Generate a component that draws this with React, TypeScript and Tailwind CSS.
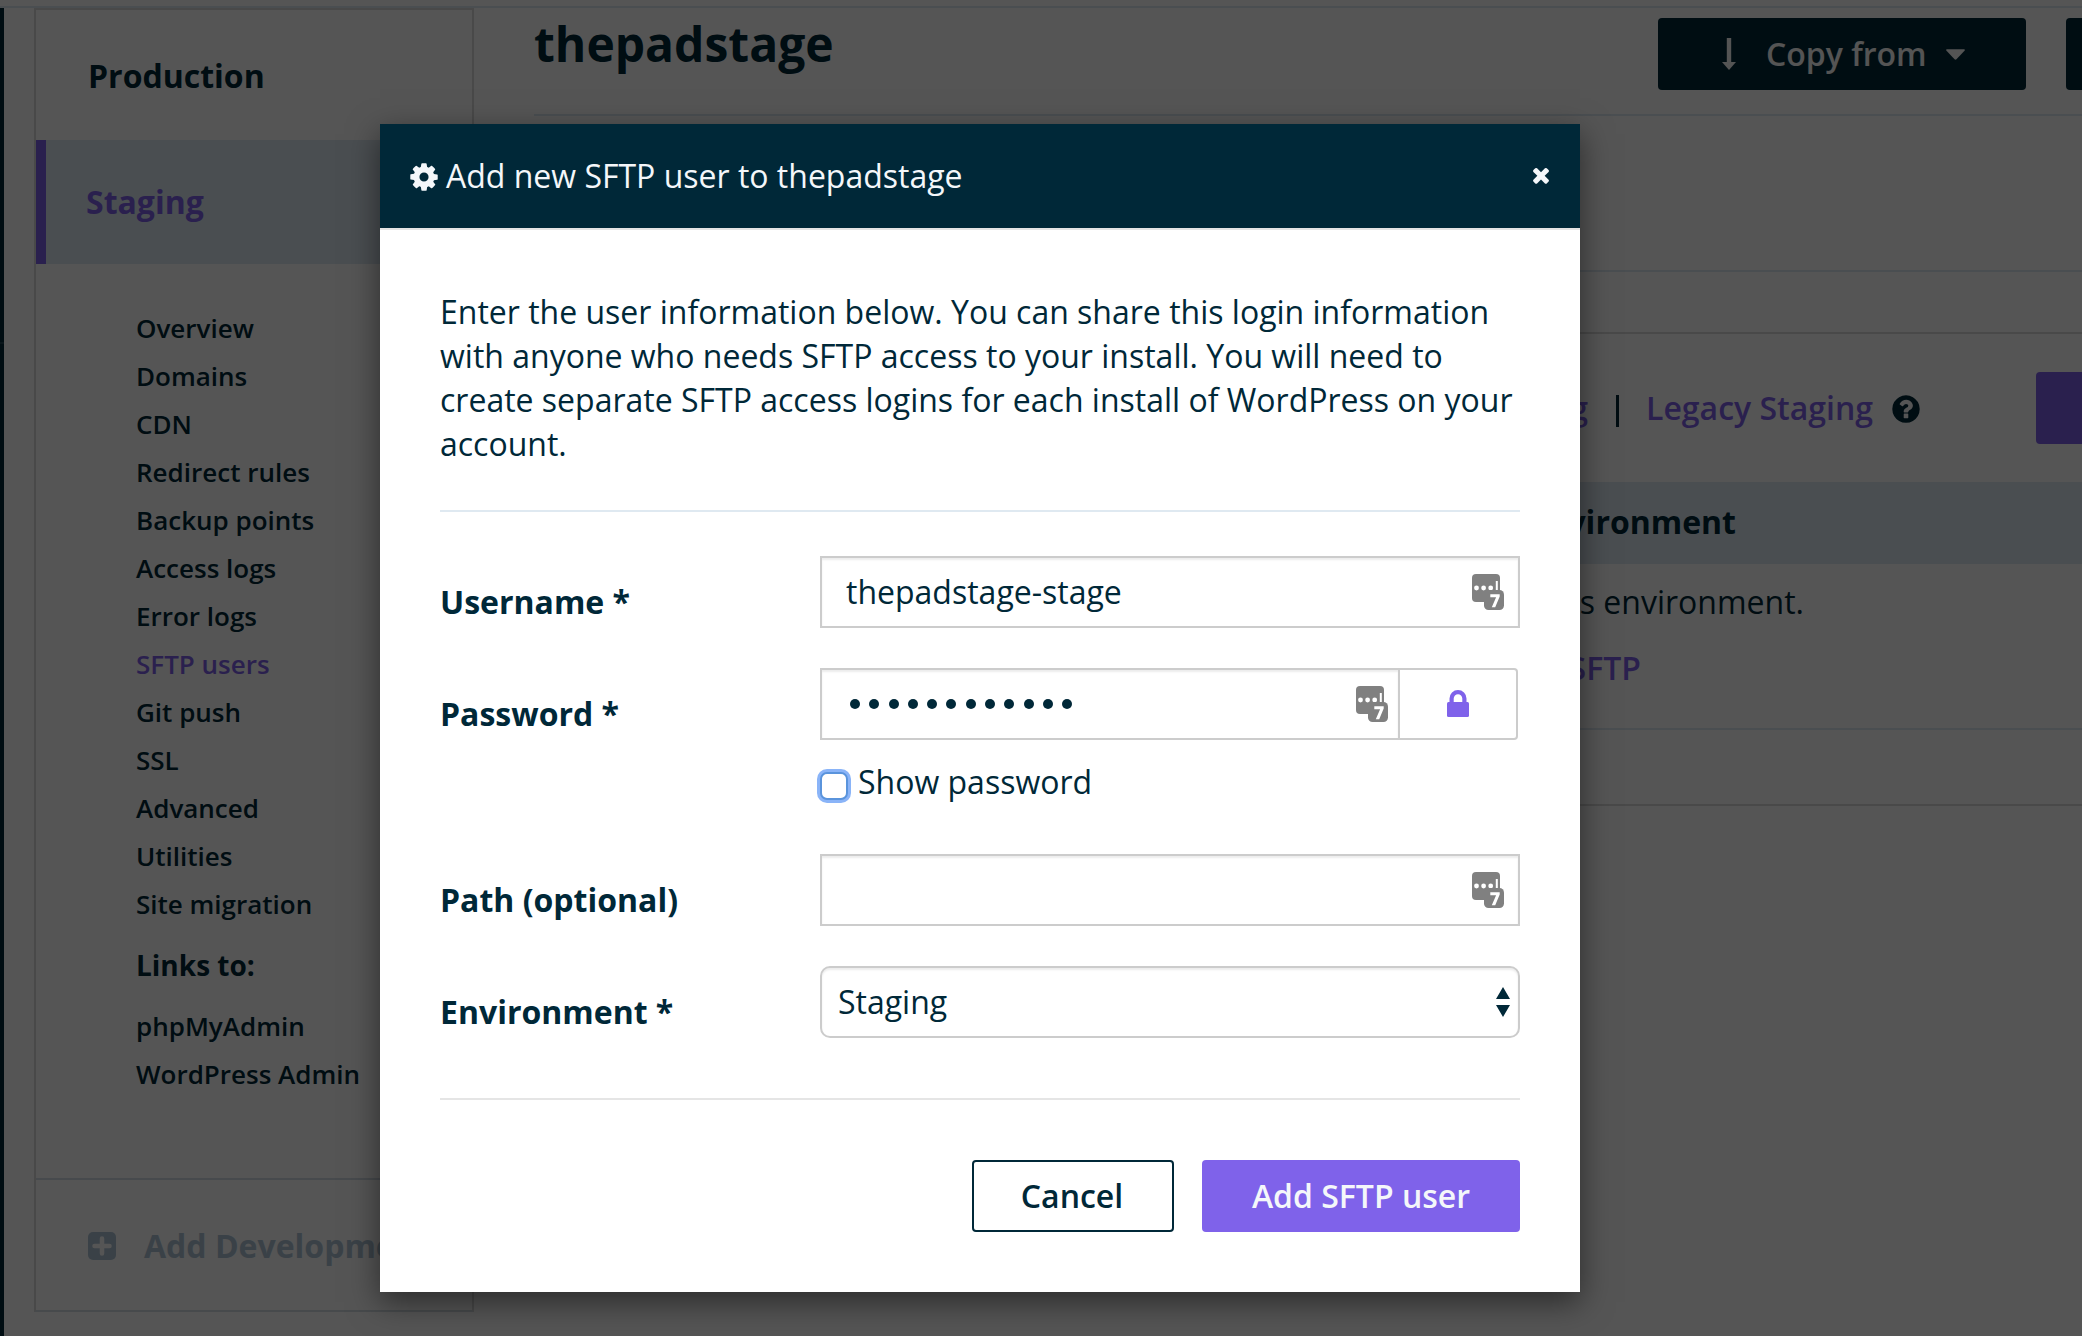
import type { ReactNode } from "react";

const COG =
  "M1152 896q0-106-75-181t-181-75-181 75-75 181 75 181 181 75 181-75 75-181zm512-109v222q0 12-8 23t-20 13l-185 28q-19 54-39 91 35 50 107 138 10 12 10 25t-9 23q-27 37-99 108t-94 71q-12 0-26-9l-138-108q-44 23-91 38-16 136-29 186-7 28-36 28h-222q-14 0-24.5-8.5t-11.5-21.5l-28-184q-49-16-90-37l-141 107q-10 9-25 9-14 0-25-11-126-114-165-168-7-10-7-23 0-12 8-23 15-21 51-66.5t54-70.5q-27-50-41-99l-183-27q-13-2-21-12.5t-8-23.5v-222q0-12 8-23t19-13l186-28q14-46 39-92-40-57-107-138-10-12-10-24 0-10 9-23 26-36 98.5-107.5t94.5-71.5q13 0 26 10l138 107q44-23 91-38 16-136 29-186 7-28 36-28h222q14 0 24.5 8.5t11.5 21.5l28 184q49 16 90 37l142-107q9-9 24-9 13 0 25 10 129 119 165 170 7 8 7 22 0 12-8 23-15 21-51 66.5t-54 70.5q26 50 41 98l183 28q13 2 21 12.5t8 23.5z";
const TIMES =
  "M1490 1322q0 40-28 68l-136 136q-28 28-68 28t-68-28l-294-294-294 294q-28 28-68 28t-68-28l-136-136q-28-28-28-68t28-68l294-294-294-294q-28-28-28-68t28-68l136-136q28-28 68-28t68 28l294 294 294-294q28-28 68-28t68 28l136 136q28 28 28 68t-28 68l-294 294 294 294q28 28 28 68z";
const HELP =
  "M1024 1376v-192q0-14-9-23t-23-9h-192q-14 0-23 9t-9 23v192q0 14 9 23t23 9h192q14 0 23-9t9-23zm256-672q0-88-55.5-163t-138.5-116-170-41q-243 0-371 213-15 24 8 42l132 100q7 6 19 6 16 0 25-12 53-68 86-92 34-24 86-24 48 0 85.5 26t37.5 59q0 38-20 61t-68 45q-63 28-115.5 86.5t-52.5 125.5v36q0 14 9 23t23 9h192q14 0 23-9t9-23q0-19 21.5-49.5t54.5-49.5q32-18 49-28.5t46-35 44.5-48 28-60.5 12.5-81zm384 192q0 209-103 385.5t-279.5 279.5-385.5 103-385.5-103-279.5-279.5-103-385.5 103-385.5 279.5-279.5 385.5-103 385.5 103 279.5 279.5 103 385.5z";

function Glyph({ d, className }: { d: string; className: string }) {
  return (
    <svg viewBox="0 0 1792 1792" fill="currentColor" className={className}>
      <path d={d} />
    </svg>
  );
}

function PasswordManagerIcon() {
  return (
    <svg viewBox="0 0 32 36" className="h-9 w-8 shrink-0">
      <rect x="0" y="0" width="28" height="28" rx="4" fill="#808080" />
      <circle cx="4.5" cy="14" r="2.4" fill="#fff" />
      <circle cx="11.6" cy="14" r="2.4" fill="#fff" />
      <circle cx="18.7" cy="14" r="2.4" fill="#fff" />
      <rect x="23.800" y="7" width="2" height="11" fill="#fff" />
      <rect x="12" y="16" width="20" height="20" rx="4.5" fill="#808080" />
      <path d="M18.300 20.300h9.400v2.300L23.200 33.300h-3.400l4.300-10h-5.800z" fill="#fff" />
    </svg>
  );
}

const navItems = [
  "Overview",
  "Domains",
  "CDN",
  "Redirect rules",
  "Backup points",
  "Access logs",
  "Error logs",
  "SFTP users",
  "Git push",
  "SSL",
  "Advanced",
  "Utilities",
  "Site migration",
];

function Sidebar() {
  return (
    <nav className="ml-[30px] h-[1304px] w-[440px] shrink-0 border-2 border-[#dadada] border-b-[#d5dde3]">
      <div className="h-[130px] pt-11 pl-[52px] text-[32px] leading-[44px] font-bold">Production</div>
      <div className="h-[124px] border-l-[10px] border-[#7f62ea] bg-[#dfebf3] pt-10 pl-10 text-[32px] leading-[44px] font-bold text-[#7f62ea]">
        Staging
      </div>
      <div className="h-[914px] pt-10 pl-[100px] text-[26px] leading-[48px] font-semibold whitespace-nowrap">
        {navItems.map((item) => (
          <div key={item} className={item === "SFTP users" ? "text-[#7f62ea]" : ""}>
            {item}
          </div>
        ))}
        <div className="my-[13px] text-[28px] font-bold">Links to:</div>
        <div>phpMyAdmin</div>
        <div>WordPress Admin</div>
      </div>
      <div className="flex h-[130px] items-center border-t-2 border-[#d5dfe7] pt-1 pl-[52px] text-[32px] leading-[44px] font-bold text-[#aec4d6]">
        <svg viewBox="0 0 28 28" className="mr-[28px] size-7 shrink-0">
          <rect width="28" height="28" rx="5" fill="currentColor" />
          <path d="M14 6.500v15M6.500 14h15" stroke="#fff" strokeWidth="4.500" strokeLinecap="round" />
        </svg>
        <span className="whitespace-nowrap">Add Development</span>
      </div>
    </nav>
  );
}

function MainContent() {
  return (
    <main className="ml-[60px] flex w-[1700px] shrink-0 flex-col">
      <div className="flex h-[108px] items-start justify-between border-b-2 border-[#dfebf3]">
        <h1 className="pt-[2px] text-[48px] leading-[68px] font-bold">thepadstage</h1>
        <div className="mr-[8px] flex gap-10 pt-[10px]">
          <div className="flex h-[72px] w-[368px] items-center rounded bg-[#002838] pl-[64px] text-[32px] font-semibold text-[#fbfbfb]">
            <svg viewBox="0 0 14 32" fill="currentColor" className="mr-[30px] h-8 w-[14px] shrink-0">
              <path d="M4.800 0h4.400v24H14l-7 8-7-8h4.800z" />
            </svg>
            <span className="whitespace-nowrap">Copy from</span>
            <svg viewBox="0 0 20 11" fill="currentColor" className="ml-[19px] h-[11px] w-[19px] shrink-0">
              <path d="M1 0h18q1.500.5.500 1.600l-8.500 8.900q-1 .9-2 0L.5 1.600Q-.5.500 1 0z" />
            </svg>
          </div>
          <div className="h-[72px] w-[160px] rounded bg-[#002838]" />
        </div>
      </div>
      <div className="h-[156px] border-b-2 border-[#dfebf3]" />
      <section className="mt-[60px] h-[474px] border-2 border-[#dadada]">
        <div className="flex h-[148px] items-start pt-[38px]">
          <div className="flex h-[72px] w-[1386px] shrink-0 items-center justify-end text-[32px] font-semibold whitespace-nowrap text-[#7f62ea]">
            <span>Staging</span>
            <span className="mr-[27px] ml-[28px] mt-[5px] h-8 w-[3px] bg-[#002838]" />
            <span>Legacy Staging</span>
            <Glyph d={HELP} className="mt-[1px] ml-[17px] size-8 text-[#002838]" />
          </div>
          <div className="ml-[114px] h-[72px] w-[240px] shrink-0 rounded bg-[#7f62ea]" />
        </div>
        <div className="flex h-[82px] items-center bg-[#dfebf3] pb-[2px] text-[32px] font-bold">
          <span className="w-[1200px] text-right">Environment</span>
        </div>
        <div className="h-[166px] border-b-2 border-[#dfebf3] pt-[5px] text-[32px]">
          <div className="w-[1268px] text-right leading-[66px]">There are no users for this environment.</div>
          <div className="w-[1105px] text-right leading-[66px] font-semibold text-[#7f62ea]">Learn more about SFTP</div>
        </div>
      </section>
    </main>
  );
}

function Row({ label, className, children }: { label: string; className: string; children: ReactNode }) {
  return (
    <div className={`flex ${className}`}>
      <label className="w-[380px] shrink-0 pt-6 leading-[44px] font-bold">{label}</label>
      <div className="w-[700px]">{children}</div>
    </div>
  );
}

function Modal() {
  return (
    <div className="absolute top-[124px] left-[380px] flex h-[1168px] w-[1200px] flex-col bg-white text-[32px] text-[#002838] shadow-[0_10px_30px_rgba(0,0,0,0.5)]">
      <header className="flex h-[106px] shrink-0 items-center border-b-2 border-[#e5e5e5] bg-[#002838] pr-[27px] pl-7 text-[#f4f7fa]">
        <Glyph d={COG} className="mt-[1px] mr-[6px] size-8" />
        <h2 className="leading-[44px]">Add new SFTP user to thepadstage</h2>
        <Glyph d={TIMES} className="mb-[2px] ml-auto size-6" />
      </header>
      <div className="px-[60px] pt-[60px]">
        <p className="h-[222px] border-b-2 border-[#dfe9f1] leading-[44px]">
          Enter the user information below. You can share this login information with anyone who needs SFTP access to
          your install. You will need to create separate SFTP access logins for each install of WordPress on your
          account.
        </p>
        <Row label="Username *" className="mt-11 h-[112px]">
          <div className="flex h-[72px] items-center justify-between border-2 border-[#ccc] pr-[14px] pl-6 shadow-[inset_0_2px_2px_rgba(0,0,0,0.075)]">
            <span>thepadstage-stage</span>
            <PasswordManagerIcon />
          </div>
        </Row>
        <Row label="Password *" className="h-[186px]">
          <div className="flex h-[72px] w-[698px]">
            <div className="flex w-[580px] items-center justify-between border-2 border-[#ccc] pr-[10px] pl-[28px] shadow-[inset_0_2px_2px_rgba(0,0,0,0.075)]">
              <div className="flex gap-[9.300px]">
                {navItems.slice(0, 12).map((item) => (
                  <span key={item} className="size-[10px] rounded-full bg-[#002838]" />
                ))}
              </div>
              <PasswordManagerIcon />
            </div>
            <div className="flex flex-1 items-center justify-center rounded-r border-2 border-l-0 border-[#ccc]">
              <svg viewBox="0 0 22 27" className="mb-[1px] h-[27px] w-[22px] text-[#7f62ea]">
                <rect x="0" y="12" width="22" height="15" rx="1.500" fill="currentColor" />
                <path
                  d="M4.600 13V8.500a6.400 6.400 0 0 1 12.800 0V13"
                  fill="none"
                  stroke="currentColor"
                  strokeWidth="4.200"
                />
              </svg>
            </div>
          </div>
          <div className="mt-5 flex">
            <span className="mt-3 mr-[10px] size-7 rounded-[7px] border-2 border-[#5a94dc] bg-white shadow-[0_0_0_3px_#8ab4f8]" />
            <span className="leading-[44px]">Show password</span>
          </div>
        </Row>
        <Row label="Path (optional)" className="h-[112px]">
          <div className="flex h-[72px] items-center justify-end border-2 border-[#ccc] pr-[14px] shadow-[inset_0_2px_2px_rgba(0,0,0,0.075)]">
            <PasswordManagerIcon />
          </div>
        </Row>
        <Row label="Environment *" className="h-[132px]">
          <div className="flex h-[72px] items-center justify-between rounded-[10px] border-2 border-[#ccc] pr-2 pl-4 shadow-[inset_0_2px_2px_rgba(0,0,0,0.075)]">
            <span>Staging</span>
            <svg viewBox="0 0 14 30" fill="currentColor" className="h-[30px] w-[14px]">
              <path d="M7 0l7 12H0zM7 30L0 18h14z" />
            </svg>
          </div>
        </Row>
        <div className="flex justify-end gap-7 border-t-2 border-[#e5e5e5] pt-[60px] font-semibold">
          <button className="h-[72px] w-[202px] rounded border-2 border-[#002838] pr-[2px]">Cancel</button>
          <button className="h-[72px] w-[318px] rounded bg-[#7f62ea] text-[#f4f7fa]">Add SFTP user</button>
        </div>
      </div>
    </div>
  );
}

export default function App() {
  return (
    <div className="relative h-[1336px] w-[2082px] overflow-hidden bg-white font-['Open_Sans',sans-serif] text-[#002838]">
      <div className="h-2 border-b-2 border-[#dfebf3]" />
      <div className="flex h-[1328px]">
        <div className="w-1 shrink-0 bg-[#002838] pt-[334px]">
          <div className="h-[2px] bg-[#1c4150]" />
        </div>
        <Sidebar />
        <MainContent />
      </div>
      <div className="absolute inset-0 bg-black/[0.667]" />
      <Modal />
    </div>
  );
}
